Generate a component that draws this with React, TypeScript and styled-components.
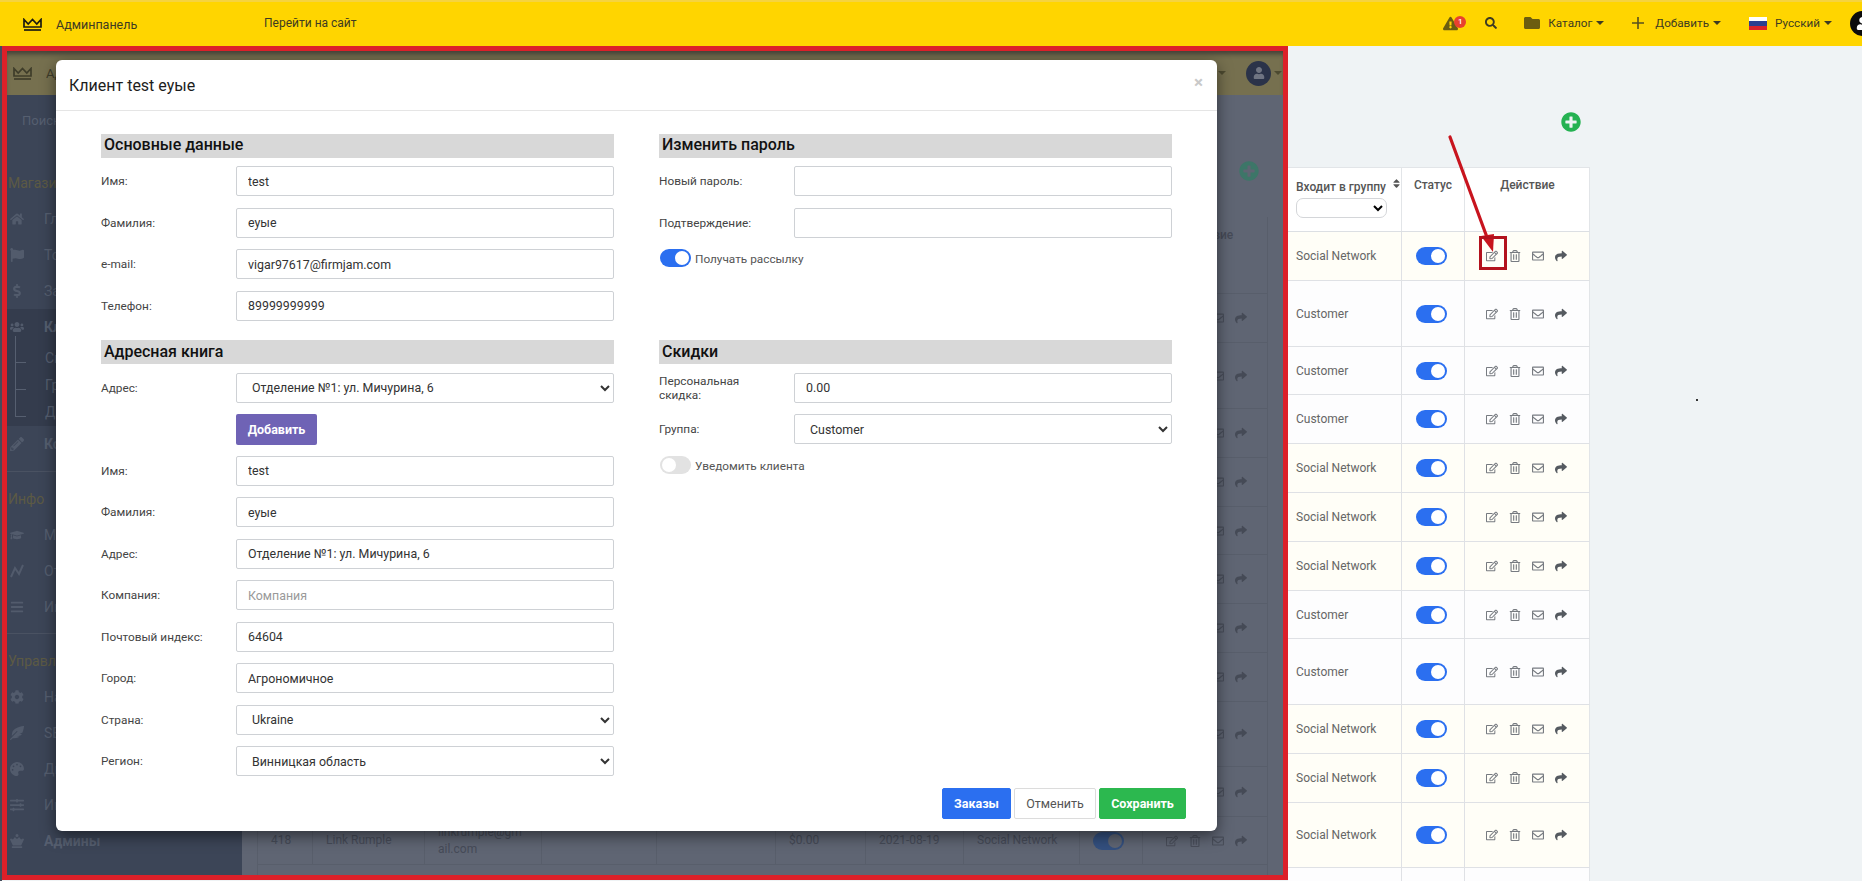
import React from "react";
import styled, { createGlobalStyle } from "styled-components";
import {
  FaChessQueen,
  FaCog,
  FaDollarSign,
  FaExclamationTriangle,
  FaFeatherAlt,
  FaFlag,
  FaFolder,
  FaGraduationCap,
  FaHome,
  FaPalette,
  FaPencilAlt,
  FaPlusCircle,
  FaRegEdit,
  FaRegEnvelope,
  FaRegTrashAlt,
  FaSearch,
  FaShare,
  FaSlidersH,
  FaSort,
  FaUser,
  FaUsers,
  FaBars,
} from "react-icons/fa";

const GlobalStyle = createGlobalStyle`
  html, body {
    margin: 0;
    padding: 0;
    width: 1862px;
    height: 881px;
    overflow: hidden;
    background: #eff3f5;
    font-family: Roboto, "Liberation Sans", sans-serif;
    font-size: 13px;
  }
  * { box-sizing: border-box; }
`;

const Page = styled.div`
  width: 1862px;
  height: 881px;
  overflow: hidden;
  display: flex;
  flex-direction: column;
`;

/* top yellow bar */
const TopBar = styled.header`
  flex: 0 0 46px;
  display: flex;
  align-items: center;
  background: #ffd500;
  border-top: 2px solid #f5d340;
  padding-left: 23px;
  color: #3d3a22;
  position: relative;
  z-index: 2;
`;

const BrandName = styled.span`
  margin-left: 14px;
  font-size: 12.5px;
  width: 82px;
  white-space: nowrap;
`;

const SiteLink = styled.a`
  margin-left: 126px;
  font-size: 12px;
  margin-top: -2px;
  white-space: nowrap;
`;

const TopNav = styled.nav`
  margin-left: auto;
  margin-right: -13px;
  display: flex;
  align-items: center;
  margin-top: -2px;
`;

const NavItem = styled.div<{ $gap: number }>`
  margin-left: ${({ $gap }) => $gap}px;
  display: flex;
  align-items: center;
  font-size: 11.7px;
  color: #3d3a22;
  position: relative;
  white-space: nowrap;
`;

const NavText = styled.span<{ $left: number }>`
  margin-left: ${({ $left }) => $left}px;
`;

const Caret = styled.i<{ $color?: string; $left?: number }>`
  display: inline-block;
  margin-left: ${({ $left }) => ($left === undefined ? 4 : $left)}px;
  border-left: 4px solid transparent;
  border-right: 4px solid transparent;
  border-top: 4px solid ${({ $color }) => $color || "#3d3a22"};
`;

const AlertBadge = styled.b`
  position: absolute;
  right: -8px;
  top: 0;
  width: 12px;
  height: 12px;
  border-radius: 50%;
  background: #e8412e;
  color: #fff;
  font-size: 8px;
  line-height: 12px;
  text-align: center;
  font-weight: 500;
`;

const Flag = styled.div`
  width: 18px;
  height: 13px;
  background: linear-gradient(#fff 0 33%, #2a3f8f 33% 66%, #d8232a 66%);
`;

const TopAvatar = styled.div`
  width: 25px;
  height: 25px;
  border-radius: 50%;
  background: #0c0c0c;
  color: #fff;
  display: flex;
  align-items: center;
  justify-content: center;
  font-size: 13px;
`;

/* everything under the yellow bar */
const Workspace = styled.main`
  flex: 1;
  display: flex;
  align-items: flex-start;
  padding-left: 2px;
  min-height: 0;
  background: linear-gradient(90deg, #454c5b 2px, #eff3f5 2px);
`;

/* red frame holding the screenshot of the dialog */
const Frame = styled.section`
  flex: 0 0 1286px;
  height: 834px;
  border: 5px solid #dc2029;
  position: relative;
  overflow: hidden;
  background: #5f6573;
`;

const InnerTop = styled.div`
  height: 44px;
  display: flex;
  align-items: center;
  padding: 0 1px 0 6px;
  background: #76704f;
  color: #3f3d2a;
  box-shadow: inset 0 5px 5px -2px rgba(30, 30, 40, 0.6);
  font-size: 13px;
`;

const InnerBrand = styled.span`
  margin-left: 14px;
  width: 20px;
  overflow: hidden;
  white-space: nowrap;
`;

const InnerTools = styled.div`
  margin-left: auto;
  display: flex;
  align-items: center;
`;

const InnerAvatar = styled.div`
  margin-left: 20px;
  width: 25px;
  height: 25px;
  border-radius: 50%;
  background: #2b3349;
  color: #6f7482;
  display: flex;
  align-items: center;
  justify-content: center;
  font-size: 12px;
`;

const InnerMain = styled.div`
  display: flex;
  height: 780px;
`;

const Sidebar = styled.aside`
  flex: 0 0 235px;
  background: #3c4557;
  color: #565f70;
`;

const SearchLine = styled.div`
  height: 52px;
  padding-left: 15px;
  line-height: 52px;
  font-size: 13px;
`;

const SideLabel = styled.div<{ $first?: boolean }>`
  height: 36px;
  line-height: 36px;
  margin-top: ${({ $first }) => ($first ? 18 : 0)}px;
  padding-left: 1px;
  font-size: 14px;
  color: #5c5a44;
`;

const SideItem = styled.div<{ $bold?: boolean }>`
  height: 36px;
  display: flex;
  align-items: center;
  font-size: 14px;
  font-weight: ${({ $bold }) => ($bold ? 700 : 400)};
  padding-left: 3px;
  svg {
    flex: 0 0 14px;
    font-size: 14px;
    color: #525b6c;
    margin-right: 20px;
  }
`;

const SideGroup = styled.div`
  background: #343c4d;
`;

const SubList = styled.div`
  height: 81px;
  margin-left: 8px;
  display: flex;
  flex-direction: column;
`;

const SubItem = styled.div`
  height: 27px;
  line-height: 27px;
  padding-left: 29px;
  font-size: 14px;
  border-left: 1px solid #565f70;
  position: relative;
  &::before {
    content: "";
    position: absolute;
    left: 0;
    top: 17px;
    width: 10px;
    border-top: 1px solid #565f70;
  }
  &:first-child {
    margin-top: -9px;
    height: 36px;
    padding-top: 9px;
  }
  &:first-child::before {
    top: 26px;
  }
  &:last-child {
    height: 18px;
  }
`;

const SideDivider = styled.hr<{ $top: number }>`
  margin: ${({ $top }) => $top}px 0 9px;
  border: 0;
  border-top: 1px solid #4a5262;
`;

const InnerContent = styled.div`
  flex: 1;
  padding-left: 15px;
  color: #464b58;
  font-size: 12px;
`;

const InnerHead = styled.div`
  height: 122px;
  width: 1011px;
  display: flex;
  justify-content: flex-end;
  padding: 66px 9px 0 0;
  font-size: 20px;
  color: #3d7668;
`;

const InnerGrid = styled.div<{ $h: number }>`
  width: 1011px;
  height: ${({ $h }) => $h}px;
  display: grid;
  grid-template-columns: 55px 112px 117px 115px 119px 90px 98px 116px 63px 126px;
  border-bottom: 1px solid #585e6b;
  border-right: 1px solid #585e6b;
  border-left: 1px solid #585e6b;
`;

const InnerCell = styled.div<{ $head?: boolean }>`
  padding: ${({ $head }) => ($head ? 10 : 0)}px 18px 0 13px;
  display: flex;
  align-items: ${({ $head }) => ($head ? "flex-start" : "center")};
  font-weight: ${({ $head }) => ($head ? 500 : 400)};
  border-right: 1px solid #585e6b;
  line-height: 17px;
  word-break: break-all;
  &:last-child {
    border-right: 0;
    justify-content: center;
    padding-left: 0;
    padding-right: 0;
  }
`;

/* dialog, lies over the dimmed page */
const Modal = styled.div`
  position: absolute;
  left: 49px;
  top: 9px;
  width: 1161px;
  height: 771px;
  background: #fff;
  border-radius: 6px;
  box-shadow: 0 5px 15px rgba(0, 0, 0, 0.5);
  display: flex;
  flex-direction: column;
`;

const ModalHeader = styled.div`
  height: 51px;
  flex: 0 0 51px;
  padding: 0 14px 0 13px;
  border-bottom: 1px solid #e5e5e5;
  display: flex;
  align-items: center;
  justify-content: space-between;
`;

const ModalTitle = styled.h4`
  margin: 0;
  font-size: 16px;
  font-weight: 400;
  color: #1d1d1d;
`;

const CloseMark = styled.span`
  font-size: 17px;
  font-weight: 700;
  color: #c9c9c9;
  margin-top: -6px;
`;

const ModalBody = styled.div`
  flex: 1;
  padding: 23px 45px 0;
  display: grid;
  grid-template-columns: 513px 513px;
  grid-template-rows: 206px 1fr;
  column-gap: 45px;
`;

const SectionTitle = styled.h3<{ $below: number; $line: number }>`
  margin: 0 0 ${({ $below }) => $below}px;
  height: 23.5px;
  line-height: ${({ $line }) => $line}px;
  padding-left: 3px;
  background: #d8d8d8;
  color: #111;
  font-size: 16px;
  font-weight: 500;
`;

const Field = styled.div`
  display: grid;
  grid-template-columns: 135px 1fr;
  align-items: center;
  height: 30px;
  margin-bottom: 11.5px;
`;

const FieldLabel = styled.label`
  color: #444;
  font-size: 11.8px;
  line-height: 14px;
  padding-right: 20px;
`;

const TextInput = styled.input`
  width: 100%;
  height: 30px;
  border: 1px solid #ced1d5;
  border-radius: 2px;
  padding: 0 11px;
  font: 12.4px Roboto, "Liberation Sans", sans-serif;
  color: #333;
  background: #fff;
  outline: none;
  &::placeholder {
    color: #999;
  }
`;

const SelectInput = styled.select`
  width: 100%;
  height: 30px;
  border: 1px solid #ced1d5;
  border-radius: 2px;
  padding: 0 9px 0 11px;
  font: 12.4px Roboto, "Liberation Sans", sans-serif;
  color: #333;
  background-color: #fff;
  outline: none;
`;

const AddButton = styled.button`
  display: block;
  margin: 0 0 10.5px 135px;
  width: 81px;
  height: 31px;
  border: 0;
  border-radius: 2px;
  background: #6f63b5;
  color: #fff;
  font: 700 12.5px Roboto, "Liberation Sans", sans-serif;
`;

const SwitchRow = styled.div`
  display: flex;
  align-items: center;
  gap: 4px;
  height: 18px;
  margin: 1px 0 0 1px;
  font-size: 11.8px;
  color: #555;
`;

const SwitchCaption = styled.span`
  padding-top: 2px;
`;

const SwitchTrack = styled.span<{ $on: boolean; $dim?: boolean }>`
  flex: 0 0 31px;
  width: 31px;
  height: 18px;
  border-radius: 9px;
  display: flex;
  align-items: center;
  padding: 0 2px;
  justify-content: ${({ $on }) => ($on ? "flex-end" : "flex-start")};
  background: ${({ $on, $dim }) =>
    $dim ? "#34507f" : $on ? "#2b6ff0" : "#e2e2e2"};
  &::after {
    content: "";
    width: 14px;
    height: 14px;
    border-radius: 50%;
    background: ${({ $dim }) => ($dim ? "#5f6573" : "#fff")};
  }
`;

const ModalFooter = styled.div`
  flex: 0 0 auto;
  display: flex;
  justify-content: flex-end;
  gap: 3px;
  padding: 0 31px 14px 0;
`;

const FooterButton = styled.button<{ $bg: string; $fg: string; $w: number }>`
  width: ${({ $w }) => $w}px;
  height: 31px;
  border: 1px solid ${({ $bg }) => ($bg === "#fff" ? "#dcdcdc" : $bg)};
  border-radius: 2px;
  background: ${({ $bg }) => $bg};
  color: ${({ $fg }) => $fg};
  font: ${({ $bg }) => ($bg === "#fff" ? 400 : 700)} 12.5px Roboto, "Liberation Sans", sans-serif;
`;

/* visible part of the customers table */
const Rest = styled.div`
  flex: 1;
  height: 100%;
  position: relative;
  background: #eff3f5;
`;

const RestHead = styled.div`
  height: 121px;
  width: 302px;
  display: flex;
  justify-content: flex-end;
  padding: 66px 9px 0 0;
  font-size: 20px;
  color: #25b252;
`;

const TableHead = styled.div`
  width: 302px;
  height: 65px;
  display: grid;
  grid-template-columns: 114px 63px 125px;
  background: #fff;
  border-top: 1px solid #e2e5e8;
  border-bottom: 1px solid #dcdfe3;
  border-right: 1px solid #e2e5e8;
  color: #555;
  font-weight: 500;
  font-size: 12px;
`;

const HeadCell = styled.div<{ $center?: boolean }>`
  padding: 10px 0 0 ${({ $center }) => ($center ? 0 : 8)}px;
  text-align: ${({ $center }) => ($center ? "center" : "left")};
  border-right: 1px solid #e2e5e8;
  white-space: nowrap;
  &:last-child {
    border-right: 0;
  }
`;

const SortIcon = styled(FaSort)`
  font-size: 11px;
  margin-left: 5px;
  vertical-align: 2px;
`;

const MiniSelect = styled.select`
  display: block;
  width: 91px;
  height: 20px;
  margin-top: 4px;
  border: 1px solid #d4d6d9;
  border-radius: 7px;
  background-color: #fff;
`;

const TableRow = styled.div<{ $h: number; $social: boolean }>`
  width: 302px;
  height: ${({ $h }) => $h}px;
  display: grid;
  grid-template-columns: 114px 63px 125px;
  background: ${({ $social }) => ($social ? "#fffef7" : "#fdfdfe")};
  border-bottom: 1px solid #dfe1e5;
  border-right: 1px solid #e2e5e8;
  color: #666;
  font-size: 12px;
`;

const RowCell = styled.div<{ $center?: boolean; $nudge?: number }>`
  display: flex;
  align-items: center;
  justify-content: ${({ $center }) => ($center ? "center" : "flex-start")};
  padding-left: ${({ $center }) => ($center ? 0 : 8)}px;
  padding-right: ${({ $nudge }) => $nudge || 0}px;
  border-right: 1px solid #dfe1e5;
  &:last-child {
    border-right: 0;
  }
`;

const ActionBox = styled.div<{ $dim?: boolean }>`
  display: flex;
  align-items: center;
  gap: 11px;
  font-size: 12px;
  color: ${({ $dim }) => ($dim ? "#494e5a" : "#777b81")};
  svg:last-child {
    color: ${({ $dim }) => ($dim ? "#454a56" : "#555a60")};
  }
`;

const ArrowMark = styled.svg`
  position: absolute;
  left: 157px;
  top: 84px;
`;

const StrayDot = styled.i`
  position: absolute;
  left: 408px;
  top: 353px;
  width: 2px;
  height: 2px;
  background: #333;
`;

const Crown = ({ color }: { color: string }) => (
  <svg width="19" height="13" viewBox="0 0 19 13" fill="none" stroke={color} strokeWidth="1.7">
    <path d="M1 1.5 L5.2 6 L9.5 1.5 L13.8 6 L18 1.5 V9 H1 Z" strokeLinejoin="miter" />
    <path d="M1 12 H18" />
  </svg>
);

const ChartIcon = () => (
  <svg width="14" height="14" viewBox="0 0 14 14" fill="none" stroke="#525b6c" strokeWidth="2">
    <path d="M1 13 L5 4 L9 10 L13 1" />
  </svg>
);

const ThinPlus = () => (
  <svg width="12" height="12" viewBox="0 0 12 12" stroke="#57501f" strokeWidth="1.6">
    <path d="M6 0 V12 M0 6 H12" />
  </svg>
);

const Actions = ({ dim }: { dim?: boolean }) => (
  <ActionBox $dim={dim}>
    <FaRegEdit />
    <FaRegTrashAlt />
    <FaRegEnvelope />
    <FaShare />
  </ActionBox>
);

const TextField = ({ label, value, placeholder }: { label: string; value?: string; placeholder?: string }) => (
  <Field>
    <FieldLabel>{label}</FieldLabel>
    <TextInput defaultValue={value} placeholder={placeholder} />
  </Field>
);

const SelectField = ({ label, value }: { label: string; value: string }) => (
  <Field>
    <FieldLabel>{label}</FieldLabel>
    <SelectInput defaultValue={value}>
      <option>{value}</option>
    </SelectInput>
  </Field>
);

const customerRows = [
  { group: "Social Network", h: 49 },
  { group: "Customer", h: 66 },
  { group: "Customer", h: 48 },
  { group: "Customer", h: 49 },
  { group: "Social Network", h: 49 },
  { group: "Social Network", h: 49 },
  { group: "Social Network", h: 49 },
  { group: "Customer", h: 48 },
  { group: "Customer", h: 66 },
  { group: "Social Network", h: 49 },
  { group: "Social Network", h: 49 },
  { group: "Social Network", h: 65 },
];

const innerHeights = [49, 66, 49, 49, 48, 49, 49, 49, 65, 50];

const InnerPage = () => (
  <>
    <InnerTop>
      <Crown color="#3f3d2a" />
      <InnerBrand>Админпанель</InnerBrand>
      <InnerTools>
        <Caret $color="#4d4a30" $left={0} />
        <InnerAvatar>
          <FaUser />
        </InnerAvatar>
        <Caret $color="#4d4a30" $left={3} />
      </InnerTools>
    </InnerTop>
    <InnerMain>
      <Sidebar>
        <SearchLine>Поиск</SearchLine>
        <SideLabel $first>Магазин</SideLabel>
        <SideItem><FaHome />Главная</SideItem>
        <SideItem><FaFlag />Товары</SideItem>
        <SideItem><FaDollarSign />Заказы</SideItem>
        <SideGroup>
          <SideItem $bold><FaUsers />Клиенты</SideItem>
          <SubList>
            <SubItem>Список</SubItem>
            <SubItem>Группы</SubItem>
            <SubItem>Дата</SubItem>
          </SubList>
        </SideGroup>
        <SideItem $bold><FaPencilAlt />Контент</SideItem>
        <SideDivider $top={9} />
        <SideLabel>Инфо</SideLabel>
        <SideItem><FaGraduationCap />Модули</SideItem>
        <SideItem><ChartIcon />Отчёты</SideItem>
        <SideItem><FaBars />Инфо</SideItem>
        <SideDivider $top={8} />
        <SideLabel>Управление</SideLabel>
        <SideItem><FaCog />Настройки</SideItem>
        <SideItem><FaFeatherAlt />SEO</SideItem>
        <SideItem><FaPalette />Дизайн</SideItem>
        <SideItem><FaSlidersH />Инструменты</SideItem>
        <SideItem $bold><FaChessQueen />Админы</SideItem>
      </Sidebar>
      <InnerContent>
        <InnerHead>
          <FaPlusCircle />
        </InnerHead>
        <InnerGrid $h={77}>
          {Array.from({ length: 9 }, (_, i) => <InnerCell key={i} $head />)}
          <InnerCell $head>Действие</InnerCell>
        </InnerGrid>
        {innerHeights.map((h, i) => (
          <InnerGrid key={i} $h={h}>
            {Array.from({ length: 9 }, (_, n) => <InnerCell key={n} />)}
            <InnerCell><Actions dim /></InnerCell>
          </InnerGrid>
        ))}
        <InnerGrid $h={48}>
          <InnerCell>418</InnerCell>
          <InnerCell>Link Rumple</InnerCell>
          <InnerCell>linkrumple@gmail.com</InnerCell>
          <InnerCell />
          <InnerCell />
          <InnerCell>$0.00</InnerCell>
          <InnerCell>2021-08-19</InnerCell>
          <InnerCell>Social Network</InnerCell>
          <InnerCell><SwitchTrack $on $dim /></InnerCell>
          <InnerCell><Actions dim /></InnerCell>
        </InnerGrid>
        <InnerGrid $h={48} />
      </InnerContent>
    </InnerMain>
  </>
);

const App: React.FC = () => (
  <Page>
    <GlobalStyle />
    <TopBar>
      <Crown color="#1c1a10" />
      <BrandName>Админпанель</BrandName>
      <SiteLink>Перейти на сайт</SiteLink>
      <TopNav>
        <NavItem $gap={0}>
          <FaExclamationTriangle size={15} color="#6b5d10" />
          <AlertBadge>1</AlertBadge>
        </NavItem>
        <NavItem $gap={27}>
          <FaSearch size={12} color="#3d3a22" />
        </NavItem>
        <NavItem $gap={27}>
          <FaFolder size={16} color="#6b5d10" />
          <NavText $left={8}>Каталог</NavText>
          <Caret />
        </NavItem>
        <NavItem $gap={28}>
          <ThinPlus />
          <NavText $left={11}>Добавить</NavText>
          <Caret />
        </NavItem>
        <NavItem $gap={28}>
          <Flag />
          <NavText $left={8}>Русский</NavText>
          <Caret />
        </NavItem>
        <NavItem $gap={18}>
          <TopAvatar><FaUser /></TopAvatar>
        </NavItem>
      </TopNav>
    </TopBar>
    <Workspace>
      <Frame>
        <InnerPage />
        <Modal>
          <ModalHeader>
            <ModalTitle>Клиент test еуые</ModalTitle>
            <CloseMark>×</CloseMark>
          </ModalHeader>
          <ModalBody>
            <div>
              <SectionTitle $below={8.5} $line={22}>Основные данные</SectionTitle>
              <TextField label="Имя:" value="test" />
              <TextField label="Фамилия:" value="еуые" />
              <TextField label="e-mail:" value="vigar97617@firmjam.com" />
              <TextField label="Телефон:" value="89999999999" />
            </div>
            <div>
              <SectionTitle $below={8.5} $line={22}>Изменить пароль</SectionTitle>
              <TextField label="Новый пароль:" />
              <TextField label="Подтверждение:" />
              <SwitchRow>
                <SwitchTrack $on />
                <SwitchCaption>Получать рассылку</SwitchCaption>
              </SwitchRow>
            </div>
            <div>
              <SectionTitle $below={9} $line={24}>Адресная книга</SectionTitle>
              <SelectField label="Адрес:" value="Отделение №1: ул. Мичурина, 6" />
              <AddButton>Добавить</AddButton>
              <TextField label="Имя:" value="test" />
              <TextField label="Фамилия:" value="еуые" />
              <TextField label="Адрес:" value="Отделение №1: ул. Мичурина, 6" />
              <TextField label="Компания:" placeholder="Компания" />
              <TextField label="Почтовый индекс:" value="64604" />
              <TextField label="Город:" value="Агрономичное" />
              <SelectField label="Страна:" value="Ukraine" />
              <SelectField label="Регион:" value="Винницкая область" />
            </div>
            <div>
              <SectionTitle $below={9} $line={24}>Скидки</SectionTitle>
              <TextField label="Персональная скидка:" value="0.00" />
              <SelectField label="Группа:" value="Customer" />
              <SwitchRow>
                <SwitchTrack $on={false} />
                <SwitchCaption>Уведомить клиента</SwitchCaption>
              </SwitchRow>
            </div>
          </ModalBody>
          <ModalFooter>
            <FooterButton $bg="#2b6ff0" $fg="#fff" $w={69}>Заказы</FooterButton>
            <FooterButton $bg="#fff" $fg="#555" $w={82}>Отменить</FooterButton>
            <FooterButton $bg="#2cb84f" $fg="#fff" $w={87}>Сохранить</FooterButton>
          </ModalFooter>
        </Modal>
      </Frame>
      <Rest>
        <RestHead>
          <FaPlusCircle />
        </RestHead>
        <TableHead>
          <HeadCell>
            Входит в группу<SortIcon />
            <MiniSelect />
          </HeadCell>
          <HeadCell $center>Статус</HeadCell>
          <HeadCell $center>Действие</HeadCell>
        </TableHead>
        {customerRows.map((row, i) => (
          <TableRow key={i} $h={row.h} $social={row.group === "Social Network"}>
            <RowCell>{row.group}</RowCell>
            <RowCell $center $nudge={3}><SwitchTrack $on /></RowCell>
            <RowCell $center $nudge={2}><Actions /></RowCell>
          </TableRow>
        ))}
        <TableRow $h={40} $social={false}>
          <RowCell />
          <RowCell />
          <RowCell />
        </TableRow>
        <ArrowMark width="65" height="145" viewBox="0 0 65 145" fill="none">
          <path d="M5 7 L43 110" stroke="#c8141e" strokeWidth="3.2" strokeLinecap="round" />
          <path d="M36 106 L49 104 L48 122 Z" fill="#c8141e" />
          <rect x="35.5" y="107.5" width="25" height="31" stroke="#b3121d" strokeWidth="3" />
        </ArrowMark>
        <StrayDot />
      </Rest>
    </Workspace>
  </Page>
);

export default App;
